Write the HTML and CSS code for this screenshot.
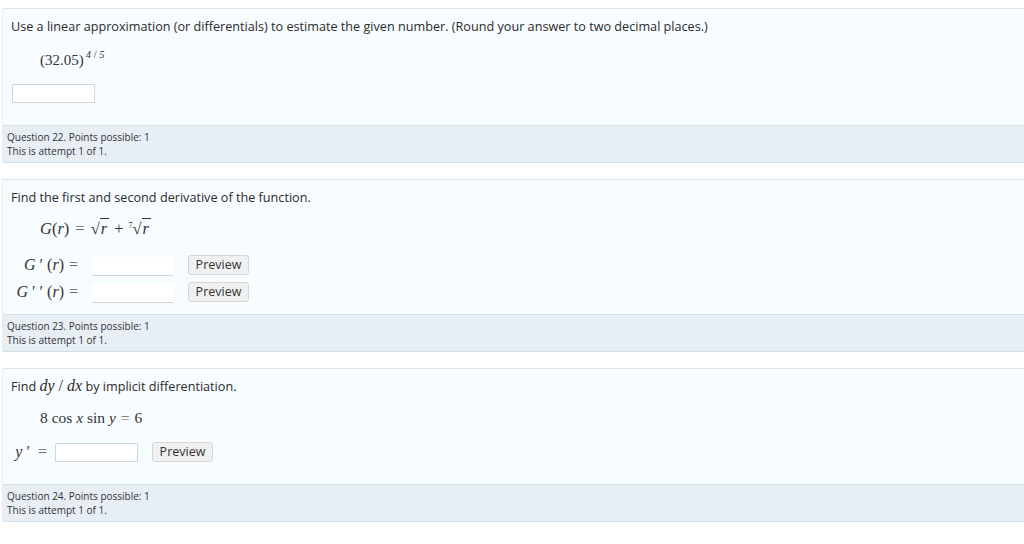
FILE: index.html
```html
<!DOCTYPE html>
<html lang="en">
<head>
    <meta charset="UTF-8">
    <meta name="viewport" content="width=device-width, initial-scale=1.0">
    <title>Questions</title>
    <link rel="stylesheet" href="styles.css">
</head>
<body>

    <!-- Question 22 -->
    <section class="problem problem-first">
        <div class="problem-body body-22">
            <p class="prompt">Use a linear approximation (or differentials) to estimate the given number. (Round your answer to two decimal places.)</p>
            <p class="formula formula-22">(32.05)<sup class="power"><i>4</i> / <i>5</i></sup></p>
            <div class="answer-row">
                <input class="answer answer-solo" type="text">
            </div>
        </div>
        <div class="problem-info">
            <div>Question 22. Points possible: 1</div>
            <div>This is attempt 1 of 1.</div>
        </div>
    </section>

    <!-- Question 23 -->
    <section class="problem">
        <div class="problem-body body-23">
            <p class="prompt">Find the first and second derivative of the function.</p>
            <p class="formula formula-23"><i>G</i>(<i>r</i>)<span class="eq">=</span><span class="radical">√<span class="radicand"><i>r</i></span></span><span class="op">+</span><span class="radical"><sup class="root-index">7</sup>√<span class="radicand"><i>r</i></span></span></p>
            <div class="answer-row">
                <span class="answer-label"><i>G</i> ′ (<i>r</i>)<span class="eq">=</span></span>
                <input class="answer answer-flat" type="text">
                <button class="preview-btn" type="button">Preview</button>
            </div>
            <div class="answer-row">
                <span class="answer-label"><i>G</i> ′ ′ (<i>r</i>)<span class="eq">=</span></span>
                <input class="answer answer-flat" type="text">
                <button class="preview-btn" type="button">Preview</button>
            </div>
        </div>
        <div class="problem-info">
            <div>Question 23. Points possible: 1</div>
            <div>This is attempt 1 of 1.</div>
        </div>
    </section>

    <!-- Question 24 -->
    <section class="problem">
        <div class="problem-body body-24">
            <p class="prompt">Find <span class="inline-math"><i>dy</i> / <i>dx</i></span> by implicit differentiation.</p>
            <p class="formula formula-24">8 cos <i>x</i> sin <i>y</i><span class="eq">=</span>6</p>
            <div class="answer-row">
                <span class="answer-label label-short"><i>y</i> ′<span class="eq">=</span></span>
                <input class="answer" type="text">
                <button class="preview-btn" type="button">Preview</button>
            </div>
        </div>
        <div class="problem-info">
            <div>Question 24. Points possible: 1</div>
            <div>This is attempt 1 of 1.</div>
        </div>
    </section>

</body>
</html>
```

FILE: styles.css
```css
/* General page styling */
body {
    font-family: 'Open Sans', 'Liberation Sans', sans-serif;
    background-color: #ffffff;
    color: #222;
    margin: 0;
    padding: 8px 0 0 2px;
    overflow: hidden;
}

p {
    margin: 0;
}

/* Question card */
.problem {
    margin-top: 16px;
    border-top: 1px solid #d9e5eb;
    border-left: 1px solid #e3edf2;
    background-color: #f7fcff;
}

.problem-first {
    margin-top: 0;
}

.problem-body {
    box-sizing: border-box;
    padding: 8px 8px 0 8px;
}

.body-22 {
    height: 116px;
}

.body-23 {
    height: 134px;
}

.body-24 {
    height: 115px;
}

.prompt {
    font-size: 12.65px;
    line-height: 18px;
    color: #2b2b2b;
}

.inline-math {
    font-family: 'Liberation Serif', serif;
    font-size: 16px;
}

/* Math lines */
.formula {
    font-family: 'Liberation Serif', serif;
    font-size: 16px;
    line-height: 20px;
    color: #333;
    padding-left: 29px;
    margin-top: 13px;
}

.formula-22 {
    margin-top: 15px;
    font-size: 15px;
}

.formula-23 {
    font-size: 16.5px;
}

.formula-24 {
    font-size: 15.5px;
}

.power {
    font-size: 10.5px;
    line-height: 0;
    vertical-align: 7px;
    margin-left: 2px;
}

.eq {
    color: #666;
    margin: 0 5px;
}

.formula-23 .eq {
    margin: 0 6px;
}

.op {
    margin: 0 5px;
}

.radical {
    white-space: nowrap;
}

.radicand {
    border-top: 1px solid #333;
    padding: 0 2px 0 1px;
}

.root-index {
    font-size: 8px;
    line-height: 0;
    vertical-align: 6px;
}

/* Answer rows */
.answer-row {
    display: flex;
    align-items: center;
    height: 27px;
}

.formula + .answer-row {
    margin-top: 12px;
}

.formula-22 + .answer-row {
    margin-top: 8px;
}

.formula-24 + .answer-row {
    margin-top: 10px;
}

.answer-label {
    font-family: 'Liberation Serif', serif;
    font-size: 16px;
    color: #333;
    width: 67px;
    margin-right: 14px;
    text-align: right;
    white-space: nowrap;
}

.answer-label .eq {
    margin-right: 0;
}

.label-short {
    width: 36px;
    margin-right: 8px;
}

.label-short .eq {
    margin-left: 8px;
}

.answer {
    box-sizing: border-box;
    width: 83px;
    height: 19px;
    padding: 0 3px;
    margin: 3px 0 0 0;
    background-color: #ffffff;
    border: 1px solid #cfd4d6;
    border-radius: 1px;
    outline: none;
}

.body-24 .answer {
    margin-top: 1px;
}

.answer-solo {
    margin-left: 1px;
}

.answer-flat {
    width: 82px;
    border-color: #ffffff;
    border-bottom-color: #cfd4d6;
}

.preview-btn {
    font-family: 'Open Sans', 'Liberation Sans', sans-serif;
    font-size: 12.5px;
    color: #333;
    width: 61px;
    height: 20px;
    padding: 0;
    margin-left: 14px;
    background-color: #f0f0f0;
    border: 1px solid #d6d6d6;
    border-radius: 3px;
}

/* Info strip under each question */
.problem-info {
    box-sizing: border-box;
    height: 38px;
    padding: 5px 4px;
    font-size: 10px;
    line-height: 13.5px;
    color: #333;
    background-color: #e7eff5;
    border-top: 1px solid #d3e0e8;
    border-bottom: 1px solid #d3e0e8;
}
```
